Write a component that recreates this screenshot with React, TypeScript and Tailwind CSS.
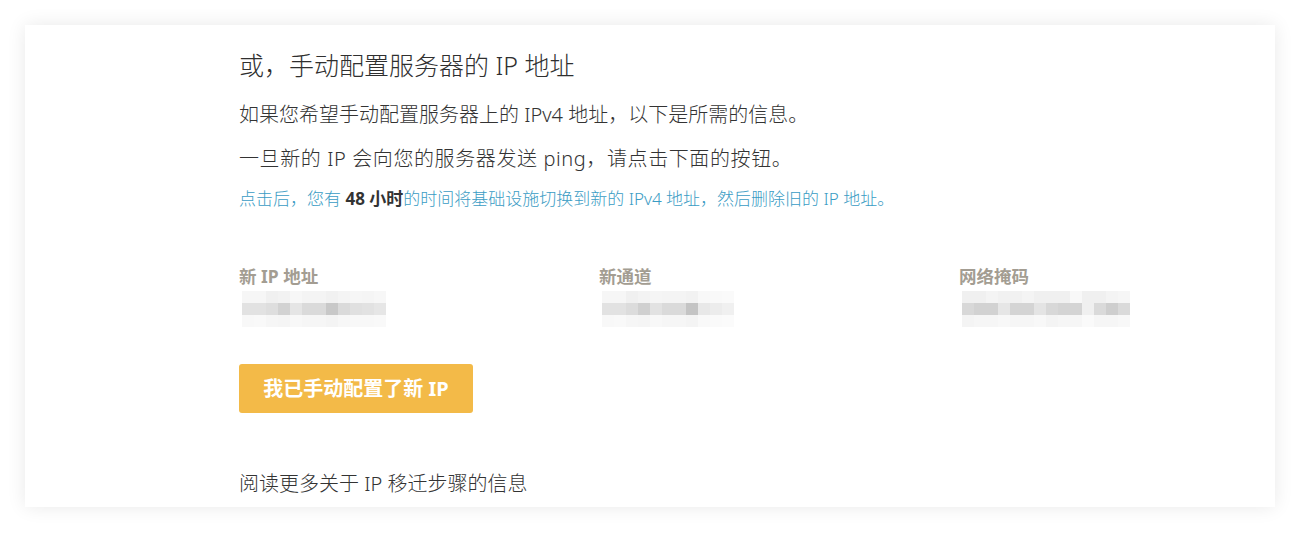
const FONT = '"Noto Sans", "Noto Sans CJK SC", sans-serif';

// Pixelated placeholder for the redacted values (3 rows of grey cells)
const blurCols: { top: number[]; mid: number[]; bot: number[] }[] = [
  {
    top: [246, 246, 240, 242, 247, 244, 244, 241, 244, 246, 245, 247],
    mid: [226, 226, 222, 210, 229, 218, 218, 200, 218, 224, 226, 230],
    bot: [248, 249, 246, 245, 248, 246, 246, 244, 247, 248, 248, 249],
  },
  {
    top: [246, 246, 240, 243, 245, 244, 244, 242, 248, 249, 250],
    mid: [226, 226, 220, 208, 226, 218, 218, 196, 232, 236, 240],
    bot: [248, 249, 246, 245, 248, 246, 246, 244, 249, 250, 251],
  },
  {
    top: [240, 240, 244, 241, 241, 244, 240, 240, 240, 248, 240, 240, 244, 246],
    mid: [216, 210, 210, 230, 212, 212, 228, 216, 212, 212, 240, 218, 206, 218],
    bot: [244, 246, 246, 248, 246, 246, 248, 244, 246, 246, 250, 246, 246, 248],
  },
];

function Redacted({ data }: { data: (typeof blurCols)[number] }) {
  const rows = [data.top, data.mid, data.bot];
  return (
    <div className="mt-[3px] ml-[3px] flex flex-col">
      {rows.map((row, r) => (
        <div key={r} className="flex h-[12px]">
          {row.map((g, i) => (
            <div
              key={i}
              className="h-full w-[12px]"
              style={{ backgroundColor: `rgb(${g},${g},${g})` }}
            />
          ))}
        </div>
      ))}
    </div>
  );
}

const fields = ["新 IP 地址", "新通道", "网络掩码"];

export default function App() {
  return (
    <div className="min-h-screen bg-white px-[25px] pt-[25px] pb-[26px]" style={{ fontFamily: FONT }}>
      <section className="bg-white pt-[24px] pb-[9px] pl-[214px] shadow-[0_0_18px_rgba(0,0,0,0.09)]">
        <h2 className="text-[25px] leading-[32px] font-light text-[#2f2f2f]">
          或，手动配置服务器的 IP 地址
        </h2>
        <p className="mt-[20px] text-[20px] leading-[28px] font-light text-[#333]">
          如果您希望手动配置服务器上的 IPv4 地址，以下是所需的信息。
        </p>
        <p className="mt-[16px] text-[20px] leading-[28px] font-light tracking-[0.6px] text-[#333]">
          一旦新的 IP 会向您的服务器发送 ping，请点击下面的按钮。
        </p>
        <p className="mt-[14px] text-[17px] leading-[24px] font-light text-[#3a9cc4]">
          点击后，您有 <strong className="font-bold text-[#333]">48 小时</strong>
          的时间将基础设施切换到新的 IPv4 地址，然后删除旧的 IP 地址。
        </p>

        <div className="mt-[53px] grid grid-cols-[360px_360px_360px]">
          {fields.map((label, i) => (
            <div key={label}>
              <div className="text-[17.5px] leading-[24px] font-bold text-[#a39d92]">{label}</div>
              <Redacted data={blurCols[i]} />
            </div>
          ))}
        </div>

        <button
          type="button"
          className="mt-[37px] flex h-[49px] w-[234px] items-center justify-center rounded-[3px] bg-[#f3ba48] text-[20px] font-bold text-white"
        >
          我已手动配置了新 IP
        </button>

        <a href="#" className="mt-[57px] block text-[20px] leading-[28px] font-light text-[#333]">
          阅读更多关于 IP 移迁步骤的信息
        </a>
      </section>
    </div>
  );
}
